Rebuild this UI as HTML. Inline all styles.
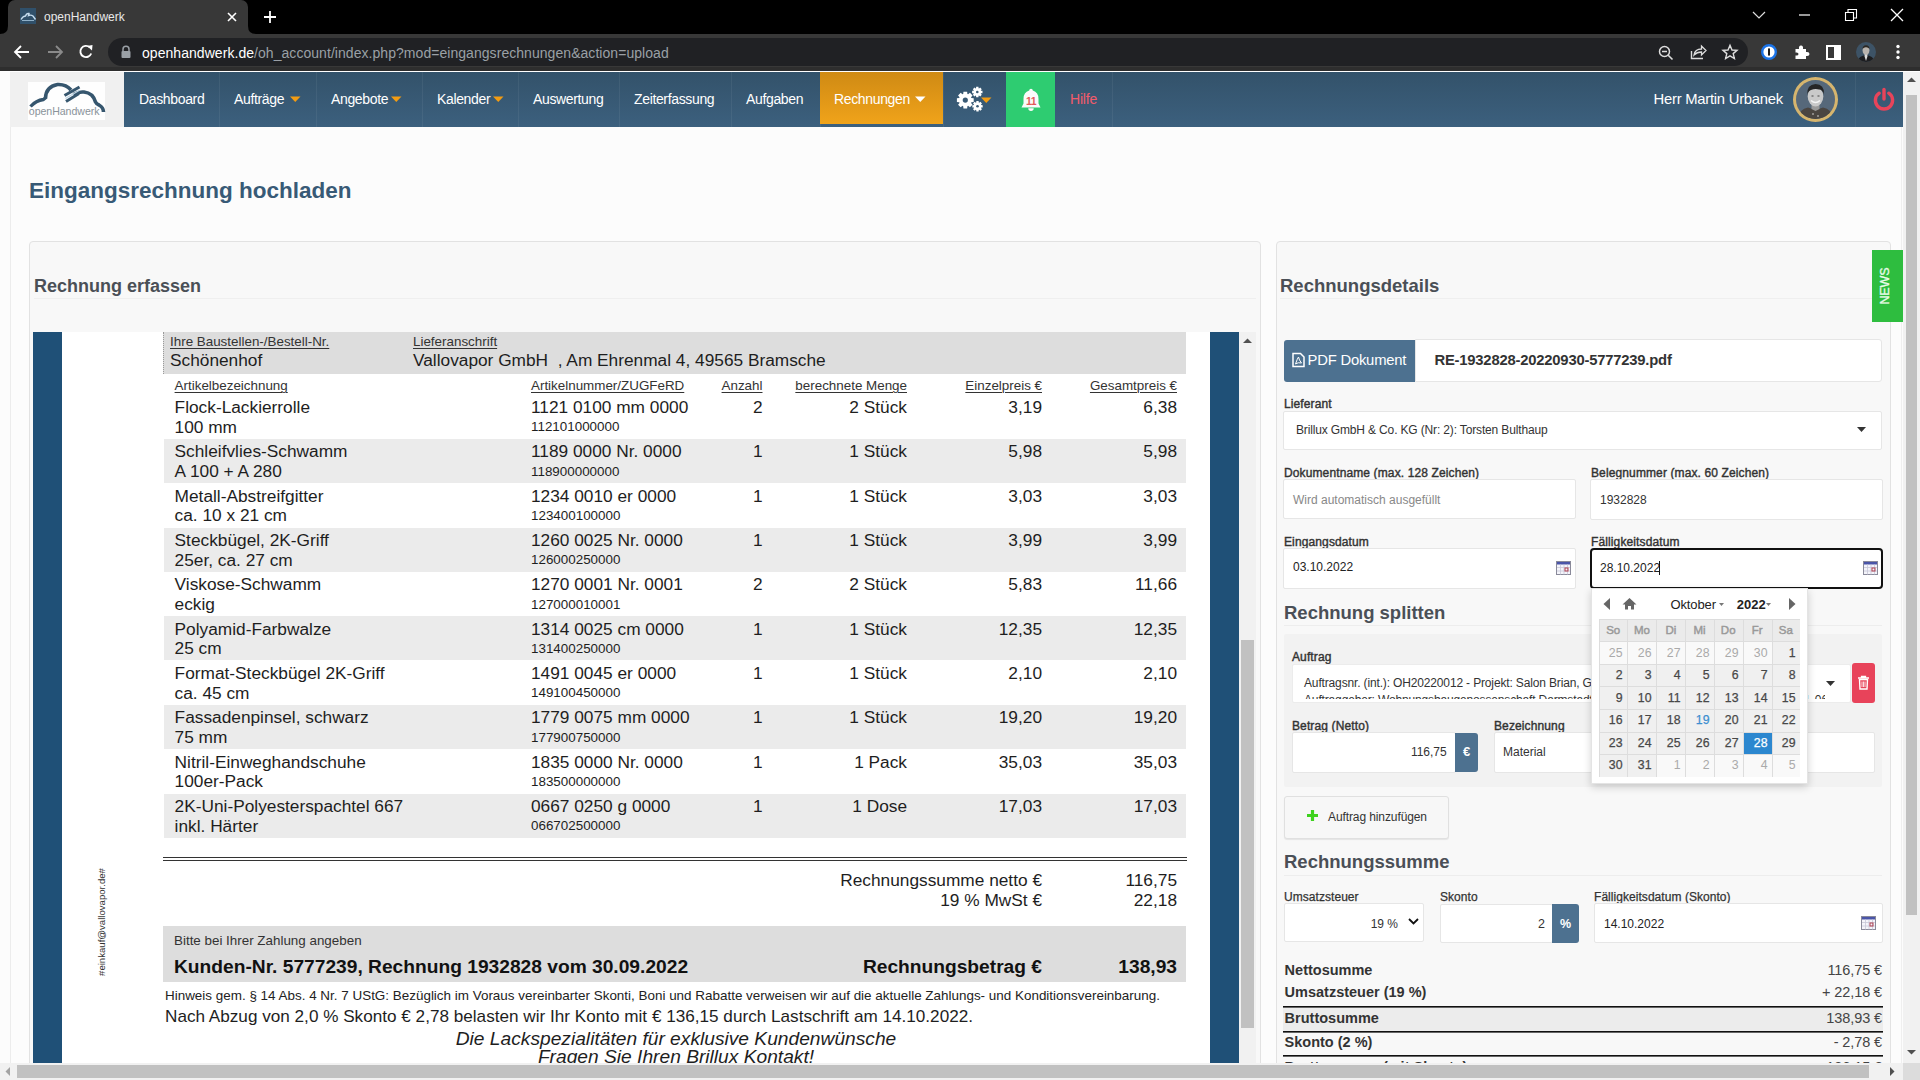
<!DOCTYPE html><html><head><meta charset="utf-8"><style>
*{box-sizing:border-box;margin:0;padding:0}
html,body{width:1920px;height:1080px;overflow:hidden;background:#fcfcfc;font-family:"Liberation Sans",sans-serif;position:relative}
.a{position:absolute}
.t{position:absolute;line-height:1;white-space:nowrap}
.u{text-decoration:underline;text-underline-offset:2px;text-decoration-thickness:1px}
svg{position:absolute;overflow:visible}
</style></head><body>
<div class="a" style="left:0px;top:0px;width:1920px;height:34px;background:#000"></div>
<div class="a" style="left:8px;top:0;width:240px;height:35px;background:#383838;border-radius:7px 7px 0 0"></div>
<svg style="left:0;top:26px" width="8" height="9"><path d="M0 8 Q8 8 8 0 L8 9 L0 9Z" fill="#383838"/></svg>
<svg style="left:248px;top:26px" width="8" height="9"><path d="M8 8 Q0 8 0 0 L0 9 L8 9Z" fill="#383838"/></svg>
<div class="a" style="left:20px;top:8px;width:16px;height:16px;background:#30506a"></div>
<svg style="left:20px;top:8px" width="16" height="16"><path d="M1 11.5 Q3 8 5.5 8 Q6.5 5 9 5.5 L8.5 7.5 Q11 6.5 13 8 L15.5 11.5" stroke="#c5dcee" stroke-width="1.4" fill="none"/><path d="M2 12.5 H14" stroke="#8fb0c8" stroke-width="1"/></svg>
<div class="t" style="left:44.0px;top:10.8px;font-size:12px;color:#e8e8e8">openHandwerk</div>
<svg style="left:227px;top:12px" width="10" height="10"><path d="M1 1 L9 9 M9 1 L1 9" stroke="#fff" stroke-width="1.6"/></svg>
<svg style="left:263px;top:10px" width="14" height="14"><path d="M7 1 V13 M1 7 H13" stroke="#fff" stroke-width="1.8"/></svg>
<svg style="left:1752px;top:9px" width="14" height="10"><path d="M1 3 L7 9 L13 3" stroke="#ddd" stroke-width="1.2" fill="none"/></svg>
<svg style="left:1799px;top:14px" width="12" height="2"><path d="M0 1 H11" stroke="#fff" stroke-width="1.2"/></svg>
<svg style="left:1845px;top:9px" width="12" height="12"><path d="M0.5 3.5 H8.5 V11.5 H0.5Z M3 3.5 V0.5 H11.5 V9 H8.5" stroke="#fff" stroke-width="1.1" fill="none"/></svg>
<svg style="left:1890px;top:8px" width="14" height="14"><path d="M1 1 L13 13 M13 1 L1 13" stroke="#fff" stroke-width="1.3"/></svg>
<div class="a" style="left:0px;top:34px;width:1920px;height:37px;background:#383838"></div>
<div class="a" style="left:108px;top:38px;width:1640px;height:28px;background:#202124;border-radius:14px"></div>
<div class="a" style="left:0px;top:67px;width:1920px;height:4px;background:#2e2e2e"></div>
<div class="a" style="left:0px;top:71px;width:1920px;height:1px;background:#fff"></div>
<svg style="left:13px;top:44px" width="18" height="16"><path d="M16 8 H2 M8 2 L2 8 L8 14" stroke="#fff" stroke-width="1.8" fill="none"/></svg>
<svg style="left:46px;top:44px" width="18" height="16"><path d="M2 8 H16 M10 2 L16 8 L10 14" stroke="#8a8a8a" stroke-width="1.8" fill="none"/></svg>
<svg style="left:78px;top:44px" width="16" height="16"><path d="M13.2 9.5 A5.6 5.6 0 1 1 11.8 3.4" stroke="#fff" stroke-width="1.9" fill="none"/><path d="M9 2 L14.5 1 L14 6.5Z" fill="#fff"/></svg>
<svg style="left:120px;top:45px" width="12" height="14"><path d="M3 6 V4.2 A3 3 0 0 1 9 4.2 V6" stroke="#9aa0a6" stroke-width="1.5" fill="none"/><rect x="1.5" y="6" width="9" height="7" rx="1" fill="#9aa0a6"/></svg>
<div class="t" style="left:142.0px;top:45.6px;font-size:14px;letter-spacing:0.05px"><span style="color:#fff">openhandwerk.de</span><span style="color:#9aa0a6">/oh_account/index.php?mod=eingangsrechnungen&amp;action=upload</span></div>
<svg style="left:1658px;top:45px" width="16" height="16"><circle cx="6.5" cy="6.5" r="5" stroke="#ddd" stroke-width="1.5" fill="none"/><path d="M4 6.5 H9 M10.2 10.2 L14.5 14.5" stroke="#ddd" stroke-width="1.6"/></svg>
<svg style="left:1690px;top:44px" width="17" height="16"><path d="M1.5 7 V14.5 H13" stroke="#ddd" stroke-width="1.4" fill="none"/><path d="M4 11 Q5 5 11.5 5 V2 L16 6.5 L11.5 11 V8 Q7 8 4 11Z" stroke="#ddd" stroke-width="1.3" fill="none"/></svg>
<svg style="left:1722px;top:44px" width="16" height="16"><path d="M8 1.2 L10 6 L15 6.3 L11.2 9.6 L12.4 14.6 L8 11.9 L3.6 14.6 L4.8 9.6 L1 6.3 L6 6Z" stroke="#ddd" stroke-width="1.4" fill="none"/></svg>
<svg style="left:1761px;top:44px" width="16" height="16"><circle cx="8" cy="8" r="6.8" fill="#fff" stroke="#1a73e8" stroke-width="2.4"/><rect x="7" y="4.2" width="2" height="7.6" rx="0.8" fill="#1a1a1a"/></svg>
<svg style="left:1794px;top:44px" width="16" height="16"><path d="M1.5 5 H5 Q4.5 1.5 7 1.5 Q9.5 1.5 9 5 H12 V8 Q15.5 7.5 15.5 10 Q15.5 12.5 12 12 V15 H1.5 V11.5 Q4.5 12 4.5 10 Q4.5 8 1.5 8.5Z" fill="#fff"/></svg>
<svg style="left:1826px;top:45px" width="15" height="15"><rect x="1" y="1" width="13" height="13" fill="none" stroke="#fff" stroke-width="2"/><rect x="8" y="1" width="6" height="13" fill="#fff"/></svg>
<svg style="left:1856px;top:42px" width="20" height="20"><clipPath id="pav"><circle cx="10" cy="10" r="10"/></clipPath><g clip-path="url(#pav)"><rect width="20" height="20" fill="#3d5366"/><path d="M1 20 Q3 13.5 10 13 Q17 13.5 19 20Z" fill="#1d1d1f"/><path d="M8.6 12 V14.5 L10 19 L11.4 14.5 V12Z" fill="#ddd"/><ellipse cx="10" cy="8.3" rx="3.4" ry="4.4" fill="#b9b4ae"/><path d="M6.5 7 Q6.5 3.2 10 3.2 Q13.5 3.2 13.5 7 Q12 5 10 5.2 Q8 5 6.5 7Z" fill="#2a2622"/></g></svg>
<svg style="left:1895px;top:44px" width="6" height="16"><circle cx="3" cy="2.5" r="1.7" fill="#fff"/><circle cx="3" cy="8" r="1.7" fill="#fff"/><circle cx="3" cy="13.5" r="1.7" fill="#fff"/></svg>
<div class="a" style="left:10px;top:72px;width:114px;height:55px;background:#f0f0f0"></div>
<div class="a" style="left:10px;top:127px;width:1px;height:940px;background:#ececec"></div>
<div class="a" style="left:1901px;top:127px;width:1px;height:940px;background:#efefef"></div>
<div class="a" style="left:28px;top:82px;width:77px;height:38px;background:#fefefe"></div>
<svg style="left:0;top:60px" width="124" height="67"><g fill="none" stroke="#36566e" stroke-linecap="butt">
<path d="M30.5 46.5 Q36 40.5 43.5 39.5 L46.5 37" stroke-width="3.3"/>
<path d="M45.5 38 Q46 26.5 57.5 24.5 Q66 24 71 30" stroke-width="3.6"/>
<path d="M73.5 34.5 Q78 31.5 84 32 Q93 33 95.5 42 Q96.5 44 99 45 Q103.5 47.5 103.5 52" stroke-width="3.6"/>
<path d="M64.5 35.5 L79.5 27" stroke-width="3"/>
<path d="M66 41.5 L79 33.5" stroke-width="3"/>
<path d="M65.5 38.5 L79.5 30.3" stroke="#bcd3e3" stroke-width="1.2"/>
</g><text x="28.8" y="54.6" style="font-family:'Liberation Sans',sans-serif" font-size="10.6" fill="#8a939a" letter-spacing="-0.05">openHandwerk</text></svg>
<div class="a" style="left:124px;top:72px;width:1779px;height:55px;background:linear-gradient(#33526a,#3c607e)"></div>
<div class="a" style="left:219px;top:72px;width:1px;height:55px;background:rgba(255,255,255,0.06)"></div>
<div class="a" style="left:316px;top:72px;width:1px;height:55px;background:rgba(255,255,255,0.06)"></div>
<div class="a" style="left:422px;top:72px;width:1px;height:55px;background:rgba(255,255,255,0.06)"></div>
<div class="a" style="left:518px;top:72px;width:1px;height:55px;background:rgba(255,255,255,0.06)"></div>
<div class="a" style="left:619px;top:72px;width:1px;height:55px;background:rgba(255,255,255,0.06)"></div>
<div class="a" style="left:731px;top:72px;width:1px;height:55px;background:rgba(255,255,255,0.06)"></div>
<div class="a" style="left:820px;top:72px;width:1px;height:55px;background:rgba(255,255,255,0.06)"></div>
<div class="a" style="left:943px;top:72px;width:1px;height:55px;background:rgba(255,255,255,0.06)"></div>
<div class="a" style="left:1006px;top:72px;width:1px;height:55px;background:rgba(255,255,255,0.06)"></div>
<div class="a" style="left:1112px;top:72px;width:1px;height:55px;background:rgba(255,255,255,0.06)"></div>
<div class="a" style="left:1855px;top:72px;width:1px;height:55px;background:rgba(255,255,255,0.06)"></div>
<div class="a" style="left:820px;top:72px;width:123px;height:52px;background:linear-gradient(#cf8a14,#f0a31a)"></div>
<div class="a" style="left:1006px;top:72px;width:49px;height:55px;background:#2ecc71"></div>
<div class="t" style="left:139.0px;top:92.1px;font-size:14px;color:#fff;letter-spacing:-0.35px">Dashboard</div>
<div class="t" style="left:234.0px;top:92.1px;font-size:14px;color:#fff;letter-spacing:-0.35px">Aufträge</div>
<svg style="left:290px;top:96px" width="11" height="7"><path d="M0 0.5 H10.5 L5.25 6Z" fill="#f39c12"/></svg>
<div class="t" style="left:331.0px;top:92.1px;font-size:14px;color:#fff;letter-spacing:-0.35px">Angebote</div>
<svg style="left:391px;top:96px" width="11" height="7"><path d="M0 0.5 H10.5 L5.25 6Z" fill="#f39c12"/></svg>
<div class="t" style="left:437.0px;top:92.1px;font-size:14px;color:#fff;letter-spacing:-0.35px">Kalender</div>
<svg style="left:493px;top:96px" width="11" height="7"><path d="M0 0.5 H10.5 L5.25 6Z" fill="#f39c12"/></svg>
<div class="t" style="left:533.0px;top:92.1px;font-size:14px;color:#fff;letter-spacing:-0.35px">Auswertung</div>
<div class="t" style="left:634.0px;top:92.1px;font-size:14px;color:#fff;letter-spacing:-0.35px">Zeiterfassung</div>
<div class="t" style="left:746.0px;top:92.1px;font-size:14px;color:#fff;letter-spacing:-0.35px">Aufgaben</div>
<div class="t" style="left:834.0px;top:92.1px;font-size:14px;color:#fff;letter-spacing:-0.35px">Rechnungen</div>
<svg style="left:915px;top:96px" width="11" height="7"><path d="M0 0.5 H10.5 L5.25 6Z" fill="#fff"/></svg>
<svg style="left:950px;top:84px" width="40" height="32"><path d="M23.70 14.26 L23.70 17.94 L21.35 18.20 L21.06 18.89 L22.54 20.74 L19.94 23.34 L18.09 21.86 L17.40 22.15 L17.14 24.50 L13.46 24.50 L13.20 22.15 L12.51 21.86 L10.66 23.34 L8.06 20.74 L9.54 18.89 L9.25 18.20 L6.90 17.94 L6.90 14.26 L9.25 14.00 L9.54 13.31 L8.06 11.46 L10.66 8.86 L12.51 10.34 L13.20 10.05 L13.46 7.70 L17.14 7.70 L17.40 10.05 L18.09 10.34 L19.94 8.86 L22.54 11.46 L21.06 13.31 L21.35 14.00Z" fill="#fff"/><circle cx="15.3" cy="16.1" r="2.6" fill="#395a74"/><path d="M32.48 6.86 L32.48 9.14 L30.98 9.28 L30.81 9.70 L31.76 10.86 L30.16 12.46 L29.00 11.51 L28.58 11.68 L28.44 13.18 L26.16 13.18 L26.02 11.68 L25.60 11.51 L24.44 12.46 L22.84 10.86 L23.79 9.70 L23.62 9.28 L22.12 9.14 L22.12 6.86 L23.62 6.72 L23.79 6.30 L22.84 5.14 L24.44 3.54 L25.60 4.49 L26.02 4.32 L26.16 2.82 L28.44 2.82 L28.58 4.32 L29.00 4.49 L30.16 3.54 L31.76 5.14 L30.81 6.30 L30.98 6.72Z" fill="#fff"/><circle cx="27.3" cy="8" r="1.3" fill="#395a74"/><path d="M32.68 21.16 L32.68 23.44 L31.18 23.58 L31.01 24.00 L31.96 25.16 L30.36 26.76 L29.20 25.81 L28.78 25.98 L28.64 27.48 L26.36 27.48 L26.22 25.98 L25.80 25.81 L24.64 26.76 L23.04 25.16 L23.99 24.00 L23.82 23.58 L22.32 23.44 L22.32 21.16 L23.82 21.02 L23.99 20.60 L23.04 19.44 L24.64 17.84 L25.80 18.79 L26.22 18.62 L26.36 17.12 L28.64 17.12 L28.78 18.62 L29.20 18.79 L30.36 17.84 L31.96 19.44 L31.01 20.60 L31.18 21.02Z" fill="#fff"/><circle cx="27.5" cy="22.3" r="1.3" fill="#395a74"/></svg>
<svg style="left:981px;top:97px" width="11" height="7"><path d="M0 0.5 H10.5 L5.25 6Z" fill="#f39c12"/></svg>
<svg style="left:1019px;top:88px" width="24" height="26"><path d="M12 0.8 A1.8 1.8 0 0 1 13.8 2.6 Q19.5 4.2 19.5 11 V15.5 L21.5 19.5 H2.5 L4.5 15.5 V11 Q4.5 4.2 10.2 2.6 A1.8 1.8 0 0 1 12 0.8Z" fill="#fafafa"/><path d="M9.3 20.3 A2.7 2.7 0 0 0 14.7 20.3Z" fill="#fafafa"/><text x="12" y="17.2" text-anchor="middle" style="font-family:'Liberation Sans',sans-serif" font-weight="bold" font-size="10.5" fill="#e25a5a" letter-spacing="-0.5">11</text></svg>
<div class="t" style="left:1070.0px;top:92.1px;font-size:14px;color:#f25b6b;letter-spacing:-0.2px">Hilfe</div>
<div class="t" style="left:1653.6px;top:91.5px;font-size:14.8px;color:#fff;letter-spacing:-0.25px">Herr Martin Urbanek</div>
<div class="a" style="left:1793px;top:77px;width:45px;height:45px;border-radius:50%;background:#d6b56e"></div>
<svg style="left:1795px;top:79px" width="41" height="41"><clipPath id="av"><circle cx="20.5" cy="20.5" r="19.5"/></clipPath><g clip-path="url(#av)"><rect width="41" height="41" fill="#56687a"/>
<path d="M2 41 Q4 30 13 28.5 L20.5 31 L28 28.5 Q37 30 39 41Z" fill="#4a4541"/>
<path d="M16.5 25 V30 L20.5 32 L24.5 30 V25Z" fill="#9a9a9a"/>
<ellipse cx="20.5" cy="17.5" rx="7.8" ry="10" fill="#c9c9c9"/>
<path d="M12.2 16 Q11.5 5.5 20.5 5 Q29.5 5 29 15.5 Q27.5 10.5 24 10.5 Q20 9.5 16 11 Q13 12 12.2 16Z" fill="#262626"/>
<path d="M16 21.5 Q20.5 25.5 25 21.5" stroke="#f4f4f4" stroke-width="1.6" fill="none"/>
<path d="M16.5 17 H18.5 M22.5 17 H24.5" stroke="#444" stroke-width="1"/>
<circle cx="18" cy="35" r="0.7" fill="#fff"/><circle cx="23" cy="37" r="0.7" fill="#fff"/></g></svg>
<svg style="left:1872px;top:88px" width="24" height="24"><path d="M7.2 5.2 A8.6 8.6 0 1 0 16.8 5.2" stroke="#e8445a" stroke-width="3.4" fill="none" stroke-linecap="round"/><path d="M12 1.5 V11" stroke="#e8445a" stroke-width="3.4" stroke-linecap="round"/></svg>
<div class="t" style="left:29.0px;top:180.0px;font-size:22.5px;font-weight:bold;color:#385a76">Eingangsrechnung hochladen</div>
<div class="a" style="left:29px;top:241px;width:1232px;height:830px;background:#f8f8f8;border:1px solid #e2e2e2;border-radius:4px"></div>
<div class="t" style="left:34.0px;top:277.4px;font-size:18px;font-weight:bold;color:#4a4f56">Rechnung erfassen</div>
<div class="a" style="left:34px;top:298px;width:1222px;height:1px;background:#efefef"></div>
<div class="a" style="left:33px;top:332px;width:1223px;height:731px;background:#fff"></div>
<div class="a" style="left:33px;top:332px;width:29px;height:731px;background:#1f5077"></div>
<div class="a" style="left:1210px;top:332px;width:29px;height:731px;background:#1f5077"></div>
<div class="a" style="left:1239px;top:332px;width:17px;height:731px;background:#f1f1f1"></div>
<div class="a" style="left:1241px;top:640px;width:13px;height:388px;background:#c1c1c1"></div>
<svg style="left:1242px;top:337px" width="11" height="8"><path d="M1 6 L5.5 1.5 L10 6Z" fill="#505050"/></svg>
<div class="a" style="left:62px;top:332px;width:1148px;height:731px;overflow:hidden">
<div class="a" style="left:101px;top:-8px;width:1023px;height:50px;background:#dddddd"></div>
<div class="a" style="left:101px;top:0px;width:1px;height:42px;border-left:1px dotted #9a9a9a"></div>
<div class="t" style="left:108.0px;top:2.7px;font-size:13.4px;color:#1e1e1e;color:#333"><span class="u">Ihre Baustellen-/Bestell-Nr.</span></div>
<div class="t" style="left:351.0px;top:2.7px;font-size:13.4px;color:#1e1e1e;color:#333"><span class="u">Lieferanschrift</span></div>
<div class="t" style="left:108.0px;top:20.4px;font-size:17.3px;color:#1e1e1e;">Schönenhof</div>
<div class="t" style="left:351.0px;top:20.4px;font-size:17.3px;color:#1e1e1e;">Vallovapor GmbH&nbsp; , Am Ehrenmal 4, 49565 Bramsche</div>
<div class="t" style="left:620.0px;top:-17.1px;font-size:17.3px;color:#1e1e1e;color:#333">g</div>
<div class="t" style="left:774.0px;top:-17.1px;font-size:17.3px;color:#1e1e1e;color:#333">g</div>
<div class="t" style="left:112.6px;top:47.1px;font-size:13.4px;color:#1e1e1e;color:#333"><span class="u">Artikelbezeichnung</span></div>
<div class="t" style="left:469.0px;top:47.1px;font-size:13.4px;color:#1e1e1e;color:#333"><span class="u">Artikelnummer/ZUGFeRD</span></div>
<div class="t" style="left:500.5px;top:47.1px;width:200px;text-align:right;font-size:13.4px;color:#1e1e1e;color:#333"><span class="u">Anzahl</span></div>
<div class="t" style="left:645.0px;top:47.1px;width:200px;text-align:right;font-size:13.4px;color:#1e1e1e;color:#333"><span class="u">berechnete Menge</span></div>
<div class="t" style="left:780.0px;top:47.1px;width:200px;text-align:right;font-size:13.4px;color:#1e1e1e;color:#333"><span class="u">Einzelpreis €</span></div>
<div class="t" style="left:915.0px;top:47.1px;width:200px;text-align:right;font-size:13.4px;color:#1e1e1e;color:#333"><span class="u">Gesamtpreis €</span></div>
<div class="t" style="left:112.6px;top:67.0px;font-size:17.3px;color:#1e1e1e;">Flock-Lackierrolle</div>
<div class="t" style="left:112.6px;top:86.5px;font-size:17.3px;color:#1e1e1e;">100 mm</div>
<div class="t" style="left:469.0px;top:67.0px;font-size:17.3px;color:#1e1e1e;">1121 0100 mm 0000</div>
<div class="t" style="left:469.0px;top:88.3px;font-size:13.4px;color:#1e1e1e;">112101000000</div>
<div class="t" style="left:600.5px;top:67.0px;width:100px;text-align:right;font-size:17.3px;color:#1e1e1e;">2</div>
<div class="t" style="left:645.0px;top:67.0px;width:200px;text-align:right;font-size:17.3px;color:#1e1e1e;">2 Stück</div>
<div class="t" style="left:780.0px;top:67.0px;width:200px;text-align:right;font-size:17.3px;color:#1e1e1e;">3,19</div>
<div class="t" style="left:915.0px;top:67.0px;width:200px;text-align:right;font-size:17.3px;color:#1e1e1e;">6,38</div>
<div class="a" style="left:102px;top:107px;width:1022px;height:44px;background:#ebebeb"></div>
<div class="t" style="left:112.6px;top:111.3px;font-size:17.3px;color:#1e1e1e;">Schleifvlies-Schwamm</div>
<div class="t" style="left:112.6px;top:130.8px;font-size:17.3px;color:#1e1e1e;">A 100 + A 280</div>
<div class="t" style="left:469.0px;top:111.3px;font-size:17.3px;color:#1e1e1e;">1189 0000 Nr. 0000</div>
<div class="t" style="left:469.0px;top:132.6px;font-size:13.4px;color:#1e1e1e;">118900000000</div>
<div class="t" style="left:600.5px;top:111.3px;width:100px;text-align:right;font-size:17.3px;color:#1e1e1e;">1</div>
<div class="t" style="left:645.0px;top:111.3px;width:200px;text-align:right;font-size:17.3px;color:#1e1e1e;">1 Stück</div>
<div class="t" style="left:780.0px;top:111.3px;width:200px;text-align:right;font-size:17.3px;color:#1e1e1e;">5,98</div>
<div class="t" style="left:915.0px;top:111.3px;width:200px;text-align:right;font-size:17.3px;color:#1e1e1e;">5,98</div>
<div class="t" style="left:112.6px;top:155.7px;font-size:17.3px;color:#1e1e1e;">Metall-Abstreifgitter</div>
<div class="t" style="left:112.6px;top:175.2px;font-size:17.3px;color:#1e1e1e;">ca. 10 x 21 cm</div>
<div class="t" style="left:469.0px;top:155.7px;font-size:17.3px;color:#1e1e1e;">1234 0010 er 0000</div>
<div class="t" style="left:469.0px;top:177.0px;font-size:13.4px;color:#1e1e1e;">123400100000</div>
<div class="t" style="left:600.5px;top:155.7px;width:100px;text-align:right;font-size:17.3px;color:#1e1e1e;">1</div>
<div class="t" style="left:645.0px;top:155.7px;width:200px;text-align:right;font-size:17.3px;color:#1e1e1e;">1 Stück</div>
<div class="t" style="left:780.0px;top:155.7px;width:200px;text-align:right;font-size:17.3px;color:#1e1e1e;">3,03</div>
<div class="t" style="left:915.0px;top:155.7px;width:200px;text-align:right;font-size:17.3px;color:#1e1e1e;">3,03</div>
<div class="a" style="left:102px;top:196px;width:1022px;height:44px;background:#ebebeb"></div>
<div class="t" style="left:112.6px;top:200.0px;font-size:17.3px;color:#1e1e1e;">Steckbügel, 2K-Griff</div>
<div class="t" style="left:112.6px;top:219.5px;font-size:17.3px;color:#1e1e1e;">25er, ca. 27 cm</div>
<div class="t" style="left:469.0px;top:200.0px;font-size:17.3px;color:#1e1e1e;">1260 0025 Nr. 0000</div>
<div class="t" style="left:469.0px;top:221.3px;font-size:13.4px;color:#1e1e1e;">126000250000</div>
<div class="t" style="left:600.5px;top:200.0px;width:100px;text-align:right;font-size:17.3px;color:#1e1e1e;">1</div>
<div class="t" style="left:645.0px;top:200.0px;width:200px;text-align:right;font-size:17.3px;color:#1e1e1e;">1 Stück</div>
<div class="t" style="left:780.0px;top:200.0px;width:200px;text-align:right;font-size:17.3px;color:#1e1e1e;">3,99</div>
<div class="t" style="left:915.0px;top:200.0px;width:200px;text-align:right;font-size:17.3px;color:#1e1e1e;">3,99</div>
<div class="t" style="left:112.6px;top:244.4px;font-size:17.3px;color:#1e1e1e;">Viskose-Schwamm</div>
<div class="t" style="left:112.6px;top:263.9px;font-size:17.3px;color:#1e1e1e;">eckig</div>
<div class="t" style="left:469.0px;top:244.4px;font-size:17.3px;color:#1e1e1e;">1270 0001 Nr. 0001</div>
<div class="t" style="left:469.0px;top:265.7px;font-size:13.4px;color:#1e1e1e;">127000010001</div>
<div class="t" style="left:600.5px;top:244.4px;width:100px;text-align:right;font-size:17.3px;color:#1e1e1e;">2</div>
<div class="t" style="left:645.0px;top:244.4px;width:200px;text-align:right;font-size:17.3px;color:#1e1e1e;">2 Stück</div>
<div class="t" style="left:780.0px;top:244.4px;width:200px;text-align:right;font-size:17.3px;color:#1e1e1e;">5,83</div>
<div class="t" style="left:915.0px;top:244.4px;width:200px;text-align:right;font-size:17.3px;color:#1e1e1e;">11,66</div>
<div class="a" style="left:102px;top:284px;width:1022px;height:44px;background:#ebebeb"></div>
<div class="t" style="left:112.6px;top:288.7px;font-size:17.3px;color:#1e1e1e;">Polyamid-Farbwalze</div>
<div class="t" style="left:112.6px;top:308.2px;font-size:17.3px;color:#1e1e1e;">25 cm</div>
<div class="t" style="left:469.0px;top:288.7px;font-size:17.3px;color:#1e1e1e;">1314 0025 cm 0000</div>
<div class="t" style="left:469.0px;top:310.0px;font-size:13.4px;color:#1e1e1e;">131400250000</div>
<div class="t" style="left:600.5px;top:288.7px;width:100px;text-align:right;font-size:17.3px;color:#1e1e1e;">1</div>
<div class="t" style="left:645.0px;top:288.7px;width:200px;text-align:right;font-size:17.3px;color:#1e1e1e;">1 Stück</div>
<div class="t" style="left:780.0px;top:288.7px;width:200px;text-align:right;font-size:17.3px;color:#1e1e1e;">12,35</div>
<div class="t" style="left:915.0px;top:288.7px;width:200px;text-align:right;font-size:17.3px;color:#1e1e1e;">12,35</div>
<div class="t" style="left:112.6px;top:333.1px;font-size:17.3px;color:#1e1e1e;">Format-Steckbügel 2K-Griff</div>
<div class="t" style="left:112.6px;top:352.6px;font-size:17.3px;color:#1e1e1e;">ca. 45 cm</div>
<div class="t" style="left:469.0px;top:333.1px;font-size:17.3px;color:#1e1e1e;">1491 0045 er 0000</div>
<div class="t" style="left:469.0px;top:354.4px;font-size:13.4px;color:#1e1e1e;">149100450000</div>
<div class="t" style="left:600.5px;top:333.1px;width:100px;text-align:right;font-size:17.3px;color:#1e1e1e;">1</div>
<div class="t" style="left:645.0px;top:333.1px;width:200px;text-align:right;font-size:17.3px;color:#1e1e1e;">1 Stück</div>
<div class="t" style="left:780.0px;top:333.1px;width:200px;text-align:right;font-size:17.3px;color:#1e1e1e;">2,10</div>
<div class="t" style="left:915.0px;top:333.1px;width:200px;text-align:right;font-size:17.3px;color:#1e1e1e;">2,10</div>
<div class="a" style="left:102px;top:373px;width:1022px;height:44px;background:#ebebeb"></div>
<div class="t" style="left:112.6px;top:377.4px;font-size:17.3px;color:#1e1e1e;">Fassadenpinsel, schwarz</div>
<div class="t" style="left:112.6px;top:396.9px;font-size:17.3px;color:#1e1e1e;">75 mm</div>
<div class="t" style="left:469.0px;top:377.4px;font-size:17.3px;color:#1e1e1e;">1779 0075 mm 0000</div>
<div class="t" style="left:469.0px;top:398.7px;font-size:13.4px;color:#1e1e1e;">177900750000</div>
<div class="t" style="left:600.5px;top:377.4px;width:100px;text-align:right;font-size:17.3px;color:#1e1e1e;">1</div>
<div class="t" style="left:645.0px;top:377.4px;width:200px;text-align:right;font-size:17.3px;color:#1e1e1e;">1 Stück</div>
<div class="t" style="left:780.0px;top:377.4px;width:200px;text-align:right;font-size:17.3px;color:#1e1e1e;">19,20</div>
<div class="t" style="left:915.0px;top:377.4px;width:200px;text-align:right;font-size:17.3px;color:#1e1e1e;">19,20</div>
<div class="t" style="left:112.6px;top:421.8px;font-size:17.3px;color:#1e1e1e;">Nitril-Einweghandschuhe</div>
<div class="t" style="left:112.6px;top:441.3px;font-size:17.3px;color:#1e1e1e;">100er-Pack</div>
<div class="t" style="left:469.0px;top:421.8px;font-size:17.3px;color:#1e1e1e;">1835 0000 Nr. 0000</div>
<div class="t" style="left:469.0px;top:443.1px;font-size:13.4px;color:#1e1e1e;">183500000000</div>
<div class="t" style="left:600.5px;top:421.8px;width:100px;text-align:right;font-size:17.3px;color:#1e1e1e;">1</div>
<div class="t" style="left:645.0px;top:421.8px;width:200px;text-align:right;font-size:17.3px;color:#1e1e1e;">1 Pack</div>
<div class="t" style="left:780.0px;top:421.8px;width:200px;text-align:right;font-size:17.3px;color:#1e1e1e;">35,03</div>
<div class="t" style="left:915.0px;top:421.8px;width:200px;text-align:right;font-size:17.3px;color:#1e1e1e;">35,03</div>
<div class="a" style="left:102px;top:462px;width:1022px;height:44px;background:#ebebeb"></div>
<div class="t" style="left:112.6px;top:466.1px;font-size:17.3px;color:#1e1e1e;">2K-Uni-Polyesterspachtel 667</div>
<div class="t" style="left:112.6px;top:485.6px;font-size:17.3px;color:#1e1e1e;">inkl. Härter</div>
<div class="t" style="left:469.0px;top:466.1px;font-size:17.3px;color:#1e1e1e;">0667 0250 g 0000</div>
<div class="t" style="left:469.0px;top:487.4px;font-size:13.4px;color:#1e1e1e;">066702500000</div>
<div class="t" style="left:600.5px;top:466.1px;width:100px;text-align:right;font-size:17.3px;color:#1e1e1e;">1</div>
<div class="t" style="left:645.0px;top:466.1px;width:200px;text-align:right;font-size:17.3px;color:#1e1e1e;">1 Dose</div>
<div class="t" style="left:780.0px;top:466.1px;width:200px;text-align:right;font-size:17.3px;color:#1e1e1e;">17,03</div>
<div class="t" style="left:915.0px;top:466.1px;width:200px;text-align:right;font-size:17.3px;color:#1e1e1e;">17,03</div>
<div class="a" style="left:101px;top:525px;width:1024px;height:1px;background:#333"></div>
<div class="a" style="left:101px;top:528px;width:1024px;height:1px;background:#333"></div>
<div class="t" style="left:580.0px;top:540.4px;width:400px;text-align:right;font-size:17.3px;color:#1e1e1e;">Rechnungssumme netto €</div>
<div class="t" style="left:915.0px;top:540.4px;width:200px;text-align:right;font-size:17.3px;color:#1e1e1e;">116,75</div>
<div class="t" style="left:580.0px;top:560.4px;width:400px;text-align:right;font-size:17.3px;color:#1e1e1e;">19 % MwSt €</div>
<div class="t" style="left:915.0px;top:560.4px;width:200px;text-align:right;font-size:17.3px;color:#1e1e1e;">22,18</div>
<div class="a" style="left:101px;top:594px;width:1023px;height:56px;background:#dddddd"></div>
<div class="t" style="left:112.0px;top:602.2px;font-size:13.4px;color:#1e1e1e;color:#333">Bitte bei Ihrer Zahlung angeben</div>
<div class="t" style="left:112.0px;top:625.2px;font-size:19.2px;color:#1e1e1e;font-weight:bold;color:#111">Kunden-Nr. 5777239, Rechnung 1932828 vom 30.09.2022</div>
<div class="t" style="left:580.0px;top:625.2px;width:400px;text-align:right;font-size:19.2px;color:#1e1e1e;font-weight:bold;color:#111">Rechnungsbetrag €</div>
<div class="t" style="left:915.0px;top:625.2px;width:200px;text-align:right;font-size:19.2px;color:#1e1e1e;font-weight:bold;color:#111">138,93</div>
<div class="t" style="left:103.0px;top:656.6px;font-size:13.45px;color:#1e1e1e;color:#222">Hinweis gem. § 14 Abs. 4 Nr. 7 UStG: Bezüglich im Voraus vereinbarter Skonti, Boni und Rabatte verweisen wir auf die aktuelle Zahlungs- und Konditionsvereinbarung.</div>
<div class="t" style="left:103.0px;top:675.5px;font-size:17.15px;color:#1e1e1e;">Nach Abzug von 2,0 % Skonto € 2,78 belasten wir Ihr Konto mit € 136,15 durch Lastschrift am 14.10.2022.</div>
<div class="t" style="left:214.0px;top:696.7px;font-size:19.2px;color:#1e1e1e;font-style:italic;width:800px;text-align:center">Die Lackspezialitäten für exklusive Kundenwünsche</div>
<div class="t" style="left:214.0px;top:714.7px;font-size:19.2px;color:#1e1e1e;font-style:italic;width:800px;text-align:center">Fragen Sie Ihren Brillux Kontakt!</div>
<div class="t" style="left:-20.5px;top:583.5px;width:120px;height:12px;font-size:9.6px;line-height:12px;text-align:center;color:#333;transform:rotate(-90deg)">#einkauf@vallovapor.de#</div>
</div>
<div class="a" style="left:1276px;top:241px;width:615px;height:840px;background:#f8f8f8;border:1px solid #e2e2e2;border-radius:4px"></div>
<div class="t" style="left:1280.0px;top:276.9px;font-size:18.5px;font-weight:bold;color:#4a4f56">Rechnungsdetails</div>
<div class="a" style="left:1280px;top:298px;width:606px;height:1px;background:#efefef"></div>
<div class="a" style="left:1872px;top:250px;width:31px;height:72px;background:#2ebd3f"></div>
<div class="t" style="left:1853px;top:279px;width:64px;height:14px;font-size:12.5px;line-height:14px;text-align:center;color:#e9fbe9;transform:rotate(-90deg);letter-spacing:-0.1px;-webkit-text-stroke:0.3px #e9fbe9">NEWS</div>
<div class="a" style="left:1415px;top:339px;width:467px;height:43px;background:#fff;border:1px solid #e6e6e6;border-radius:2px;border-radius:0 3px 3px 0"></div>
<div class="a" style="left:1284px;top:340px;width:131px;height:42px;background:#4d7190;border-radius:3px 0 0 3px"></div>
<svg style="left:1292px;top:352px" width="13" height="16"><path d="M1 1.5 H8.5 L12 5 V14.5 H1Z" fill="none" stroke="#fff" stroke-width="1.5"/><path d="M3.5 12 Q5.5 6 6.5 5 Q7 8 9.5 11 Q6 10 3.5 12Z" fill="none" stroke="#fff" stroke-width="1"/></svg>
<div class="t" style="left:1307.5px;top:353.3px;font-size:14.8px;color:#fff;letter-spacing:-0.2px">PDF Dokument</div>
<div class="t" style="left:1434.4px;top:352.5px;font-size:14.8px;font-weight:bold;color:#333;letter-spacing:-0.2px">RE-1932828-20220930-5777239.pdf</div>
<div class="t" style="left:1284.0px;top:398.1px;font-size:12px;color:#333;-webkit-text-stroke:0.4px #333;letter-spacing:0.12px">Lieferant</div>
<div class="a" style="left:1283px;top:411px;width:599px;height:39px;background:#fff;border:1px solid #e6e6e6;border-radius:2px;"></div>
<div class="t" style="left:1296.0px;top:423.6px;font-size:12px;color:#333;letter-spacing:-0.15px">Brillux GmbH &amp; Co. KG (Nr: 2): Torsten Bulthaup</div>
<svg style="left:1857px;top:427px" width="10" height="6"><path d="M0 0 H9 L4.5 5Z" fill="#333"/></svg>
<div class="t" style="left:1284.0px;top:466.8px;font-size:12px;color:#333;-webkit-text-stroke:0.4px #333;letter-spacing:0.12px">Dokumentname (max. 128 Zeichen)</div>
<div class="t" style="left:1591.0px;top:466.8px;font-size:12px;color:#333;-webkit-text-stroke:0.4px #333;letter-spacing:0.12px">Belegnummer (max. 60 Zeichen)</div>
<div class="a" style="left:1283px;top:479px;width:293px;height:40px;background:#fff;border:1px solid #e6e6e6;border-radius:2px;"></div>
<div class="a" style="left:1590px;top:479px;width:293px;height:41px;background:#fff;border:1px solid #e6e6e6;border-radius:2px;"></div>
<div class="t" style="left:1293.0px;top:493.8px;font-size:12px;color:#888">Wird automatisch ausgefüllt</div>
<div class="t" style="left:1600.0px;top:493.6px;font-size:12px;color:#333">1932828</div>
<div class="t" style="left:1284.0px;top:535.8px;font-size:12px;color:#333;-webkit-text-stroke:0.4px #333;letter-spacing:0.12px">Eingangsdatum</div>
<div class="t" style="left:1591.0px;top:535.8px;font-size:12px;color:#333;-webkit-text-stroke:0.4px #333;letter-spacing:0.12px">Fälligkeitsdatum</div>
<div class="a" style="left:1283px;top:548px;width:293px;height:41px;background:#fff;border:1px solid #e6e6e6;border-radius:2px;"></div>
<svg style="left:1556px;top:561px" width="15" height="14"><rect x="0.5" y="0.5" width="14" height="13" fill="#f4f4fa" stroke="#8a8a9a"/><rect x="1" y="1" width="13" height="2.5" fill="#4a55a8"/><path d="M1 6.5 H14 M1 10 H14 M4.5 3.5 V13.5 M8 3.5 V13.5 M11.5 3.5 V13.5" stroke="#c8c8d8" stroke-width="0.8"/><rect x="9" y="7" width="3" height="3" fill="none" stroke="#b04050" stroke-width="1"/></svg>
<div class="t" style="left:1293.0px;top:561.3px;font-size:12px;color:#222">03.10.2022</div>
<div class="a" style="left:1590px;top:548px;width:293px;height:41px;background:#fff;border:2px solid #111;border-radius:4px"></div>
<div class="t" style="left:1600.0px;top:561.5px;font-size:12px;color:#222">28.10.2022</div>
<div class="a" style="left:1659px;top:561px;width:1px;height:14px;background:#111"></div>
<svg style="left:1863px;top:561px" width="15" height="14"><rect x="0.5" y="0.5" width="14" height="13" fill="#f4f4fa" stroke="#8a8a9a"/><rect x="1" y="1" width="13" height="2.5" fill="#4a55a8"/><path d="M1 6.5 H14 M1 10 H14 M4.5 3.5 V13.5 M8 3.5 V13.5 M11.5 3.5 V13.5" stroke="#c8c8d8" stroke-width="0.8"/><rect x="9" y="7" width="3" height="3" fill="none" stroke="#b04050" stroke-width="1"/></svg>
<div class="t" style="left:1284.0px;top:603.8px;font-size:18.5px;font-weight:bold;color:#4a4f56">Rechnung splitten</div>
<div class="a" style="left:1284px;top:625px;width:598px;height:1px;background:#ededed"></div>
<div class="a" style="left:1284px;top:634px;width:598px;height:153px;background:#f2f2f2;border-radius:2px"></div>
<div class="t" style="left:1292.0px;top:650.6px;font-size:12px;color:#333;-webkit-text-stroke:0.4px #333;letter-spacing:0.12px">Auftrag</div>
<div class="a" style="left:1292px;top:664px;width:559px;height:39px;background:#fff;border:1px solid #e6e6e6;border-radius:2px;border-color:#ececec;overflow:hidden"></div>
<div class="a" style="left:1293px;top:665px;width:532px;height:34px;overflow:hidden">
<div class="t" style="left:11.0px;top:11.8px;font-size:12px;color:#333;letter-spacing:-0.15px">Auftragsnr. (int.): OH20220012 - Projekt: Salon Brian, Gründerstraße 12, 64283 Darmstadt</div>
<div class="t" style="left:11.0px;top:28.8px;font-size:12px;color:#333;letter-spacing:-0.15px">Auftraggeber: Wohnungsbaugenossenschaft Darmstadt eG, Rheinstraße 1, 64283 Darmstadt, Tel. 06151</div>
</div>
<svg style="left:1826px;top:681px" width="10" height="6"><path d="M0 0 H9 L4.5 5Z" fill="#333"/></svg>
<div class="a" style="left:1852px;top:663px;width:23px;height:40px;background:#e8435a;border-radius:3px"></div>
<svg style="left:1857px;top:675px" width="13" height="15"><path d="M1 3 H12 M4.5 3 V1.5 H8.5 V3" stroke="#fff" stroke-width="1.3" fill="none"/><path d="M2.5 4.5 H10.5 L10 14 H3Z" fill="none" stroke="#fff" stroke-width="1.4"/><path d="M5 6.5 V12 M6.5 6.5 V12 M8 6.5 V12" stroke="#fff" stroke-width="0.8"/></svg>
<div class="t" style="left:1292.0px;top:719.8px;font-size:12px;color:#333;-webkit-text-stroke:0.4px #333;letter-spacing:0.12px">Betrag (Netto)</div>
<div class="t" style="left:1494.0px;top:719.8px;font-size:12px;color:#333;-webkit-text-stroke:0.4px #333;letter-spacing:0.12px">Bezeichnung</div>
<div class="a" style="left:1292px;top:732px;width:164px;height:41px;background:#fff;border:1px solid #e6e6e6;border-radius:2px;"></div>
<div class="a" style="left:1455px;top:733px;width:23px;height:39px;background:#4d7190;border-radius:0 3px 3px 0"></div>
<div class="t" style="left:1466.5px;top:745.0px;font-size:13px;color:#fff;font-weight:bold;text-align:center;width:20px;margin-left:-10px">€</div>
<div class="t" style="left:1346.7px;top:745.8px;width:100px;text-align:right;font-size:12px;color:#333">116,75</div>
<div class="a" style="left:1494px;top:732px;width:381px;height:41px;background:#fff;border:1px solid #e6e6e6;border-radius:2px;"></div>
<div class="t" style="left:1503.0px;top:745.8px;font-size:12px;color:#333">Material</div>
<div class="a" style="left:1284px;top:796px;width:165px;height:43px;background:#f7f7f7;border:1px solid #e0e0e0;border-radius:3px;box-shadow:0 1px 1px rgba(0,0,0,0.08)"></div>
<svg style="left:1306px;top:809px" width="13" height="13"><path d="M6.5 1 V12 M1 6.5 H12" stroke="#3ed21e" stroke-width="3.2"/></svg>
<div class="t" style="left:1328.0px;top:810.8px;font-size:12px;color:#333;letter-spacing:-0.1px">Auftrag hinzufügen</div>
<div class="t" style="left:1284.0px;top:852.8px;font-size:18.5px;font-weight:bold;color:#4a4f56">Rechnungssumme</div>
<div class="a" style="left:1284px;top:875px;width:598px;height:1px;background:#ededed"></div>
<div class="t" style="left:1284.0px;top:890.6px;font-size:12px;color:#333;-webkit-text-stroke:0.25px #333;letter-spacing:0.05px">Umsatzsteuer</div>
<div class="t" style="left:1440.0px;top:890.6px;font-size:12px;color:#333;-webkit-text-stroke:0.25px #333;letter-spacing:0.05px">Skonto</div>
<div class="t" style="left:1594.0px;top:890.6px;font-size:12px;color:#333;-webkit-text-stroke:0.25px #333;letter-spacing:0.05px">Fälligkeitsdatum (Skonto)</div>
<div class="a" style="left:1284px;top:903px;width:140px;height:39px;background:#fff;border:1px solid #e6e6e6;border-radius:2px;"></div>
<div class="t" style="left:1298.0px;top:917.8px;width:100px;text-align:right;font-size:12px;color:#333">19 %</div>
<svg style="left:1408px;top:918px" width="11" height="7"><path d="M1 1 L5.5 5.5 L10 1" stroke="#111" stroke-width="1.8" fill="none"/></svg>
<div class="a" style="left:1440px;top:904px;width:113px;height:39px;background:#fff;border:1px solid #e6e6e6;border-radius:2px;"></div>
<div class="a" style="left:1552px;top:904px;width:27px;height:39px;background:#4d7190;border-radius:0 3px 3px 0"></div>
<div class="t" style="left:1565.5px;top:917.9px;font-size:12.5px;color:#fff;font-weight:bold;text-align:center;width:20px;margin-left:-10px">%</div>
<div class="t" style="left:1495.0px;top:917.9px;width:50px;text-align:right;font-size:12.5px;color:#333">2</div>
<div class="a" style="left:1594px;top:903px;width:289px;height:40px;background:#fff;border:1px solid #e6e6e6;border-radius:2px;"></div>
<svg style="left:1861px;top:916px" width="15" height="14"><rect x="0.5" y="0.5" width="14" height="13" fill="#f4f4fa" stroke="#8a8a9a"/><rect x="1" y="1" width="13" height="2.5" fill="#4a55a8"/><path d="M1 6.5 H14 M1 10 H14 M4.5 3.5 V13.5 M8 3.5 V13.5 M11.5 3.5 V13.5" stroke="#c8c8d8" stroke-width="0.8"/><rect x="9" y="7" width="3" height="3" fill="none" stroke="#b04050" stroke-width="1"/></svg>
<div class="t" style="left:1604.0px;top:917.8px;font-size:12px;color:#222">14.10.2022</div>
<div class="t" style="left:1284.6px;top:962.7px;font-size:14.5px;font-weight:bold;color:#333">Nettosumme</div>
<div class="t" style="left:1682.0px;top:962.7px;width:200px;text-align:right;font-size:14.5px;color:#444;letter-spacing:-0.1px">116,75 €</div>
<div class="t" style="left:1284.6px;top:985.3px;font-size:14.5px;font-weight:bold;color:#333">Umsatzsteuer (19 %)</div>
<div class="t" style="left:1682.0px;top:985.3px;width:200px;text-align:right;font-size:14.5px;color:#444;letter-spacing:-0.1px">+ 22,18 €</div>
<div class="a" style="left:1283px;top:1006px;width:600px;height:1px;background:#111"></div>
<div class="a" style="left:1283px;top:1007px;width:600px;height:1px;background:#666"></div>
<div class="a" style="left:1283px;top:1008px;width:600px;height:23px;background:#ececec"></div>
<div class="t" style="left:1284.6px;top:1010.7px;font-size:14.5px;font-weight:bold;color:#333">Bruttosumme</div>
<div class="t" style="left:1682.0px;top:1010.7px;width:200px;text-align:right;font-size:14.5px;color:#444;letter-spacing:-0.1px">138,93 €</div>
<div class="a" style="left:1283px;top:1031px;width:600px;height:1px;background:#111"></div>
<div class="a" style="left:1283px;top:1032px;width:600px;height:1px;background:#666"></div>
<div class="t" style="left:1284.6px;top:1035.2px;font-size:14.5px;font-weight:bold;color:#333">Skonto (2 %)</div>
<div class="t" style="left:1682.0px;top:1035.2px;width:200px;text-align:right;font-size:14.5px;color:#444;letter-spacing:-0.1px">- 2,78 €</div>
<div class="a" style="left:1283px;top:1055px;width:600px;height:1px;background:#111"></div>
<div class="a" style="left:1283px;top:1056px;width:600px;height:1px;background:#666"></div>
<div class="t" style="left:1284.6px;top:1059.7px;font-size:14.5px;font-weight:bold;color:#333">Bruttosumme (mit Skonto)</div>
<div class="t" style="left:1682.0px;top:1059.7px;width:200px;text-align:right;font-size:14.5px;color:#444;letter-spacing:-0.1px">136,15 €</div>
<div class="a" style="left:1591px;top:588px;width:217px;height:196px;background:#fff;border:1px solid #e4e4e4;box-shadow:0 3px 8px rgba(0,0,0,0.18)"></div>
<svg style="left:1602px;top:597px" width="9" height="14"><path d="M8 1 L1.5 7 L8 13Z" fill="#666"/></svg>
<svg style="left:1622px;top:597px" width="15" height="13"><path d="M7.5 1 L14.5 7.5 H12 V12.5 H9 V9 H6 V12.5 H3 V7.5 H0.5Z" fill="#666"/></svg>
<svg style="left:1788px;top:597px" width="9" height="14"><path d="M1 1 L7.5 7 L1 13Z" fill="#666"/></svg>
<div class="t" style="left:1670.4px;top:597.5px;font-size:13px;color:#222;letter-spacing:-0.1px">Oktober</div>
<div class="t" style="left:1736.8px;top:597.5px;font-size:13px;color:#222;font-weight:bold">2022</div>
<svg style="left:1719px;top:603px" width="6" height="4"><path d="M0 0 H5 L2.5 3Z" fill="#777"/></svg>
<svg style="left:1766px;top:603px" width="6" height="4"><path d="M0 0 H5 L2.5 3Z" fill="#777"/></svg>
<div class="a" style="left:1599px;top:619px;width:201px;height:158px;background:#ddd"></div>
<div class="a" style="left:1600px;top:620px;width:27px;height:21px;background:#ebebeb"></div>
<div class="t" style="left:1613.2px;top:624.8px;font-size:11.5px;color:#999;-webkit-text-stroke:0.45px #999;width:28px;margin-left:-14px;text-align:center">So</div>
<div class="a" style="left:1628px;top:620px;width:28px;height:21px;background:#ebebeb"></div>
<div class="t" style="left:1641.9px;top:624.8px;font-size:11.5px;color:#999;-webkit-text-stroke:0.45px #999;width:28px;margin-left:-14px;text-align:center">Mo</div>
<div class="a" style="left:1657px;top:620px;width:28px;height:21px;background:#ebebeb"></div>
<div class="t" style="left:1671.0px;top:624.8px;font-size:11.5px;color:#999;-webkit-text-stroke:0.45px #999;width:28px;margin-left:-14px;text-align:center">Di</div>
<div class="a" style="left:1686px;top:620px;width:28px;height:21px;background:#ebebeb"></div>
<div class="t" style="left:1699.6px;top:624.8px;font-size:11.5px;color:#999;-webkit-text-stroke:0.45px #999;width:28px;margin-left:-14px;text-align:center">Mi</div>
<div class="a" style="left:1715px;top:620px;width:28px;height:21px;background:#ebebeb"></div>
<div class="t" style="left:1728.2px;top:624.8px;font-size:11.5px;color:#999;-webkit-text-stroke:0.45px #999;width:28px;margin-left:-14px;text-align:center">Do</div>
<div class="a" style="left:1744px;top:620px;width:28px;height:21px;background:#ebebeb"></div>
<div class="t" style="left:1757.1px;top:624.8px;font-size:11.5px;color:#999;-webkit-text-stroke:0.45px #999;width:28px;margin-left:-14px;text-align:center">Fr</div>
<div class="a" style="left:1773px;top:620px;width:27px;height:21px;background:#ebebeb"></div>
<div class="t" style="left:1785.8px;top:624.8px;font-size:11.5px;color:#999;-webkit-text-stroke:0.45px #999;width:28px;margin-left:-14px;text-align:center">Sa</div>
<div class="a" style="left:1600px;top:642px;width:27px;height:22px;background:#f9f9f9"></div>
<div class="t" style="left:1592.5px;top:646.6px;width:30px;text-align:right;font-size:12.3px;color:#aaa;font-weight:normal;letter-spacing:0px">25</div>
<div class="a" style="left:1628px;top:642px;width:28px;height:22px;background:#f9f9f9"></div>
<div class="t" style="left:1621.5px;top:646.6px;width:30px;text-align:right;font-size:12.3px;color:#aaa;font-weight:normal;letter-spacing:0px">26</div>
<div class="a" style="left:1657px;top:642px;width:28px;height:22px;background:#f9f9f9"></div>
<div class="t" style="left:1650.5px;top:646.6px;width:30px;text-align:right;font-size:12.3px;color:#aaa;font-weight:normal;letter-spacing:0px">27</div>
<div class="a" style="left:1686px;top:642px;width:28px;height:22px;background:#f9f9f9"></div>
<div class="t" style="left:1679.5px;top:646.6px;width:30px;text-align:right;font-size:12.3px;color:#aaa;font-weight:normal;letter-spacing:0px">28</div>
<div class="a" style="left:1715px;top:642px;width:28px;height:22px;background:#f9f9f9"></div>
<div class="t" style="left:1708.5px;top:646.6px;width:30px;text-align:right;font-size:12.3px;color:#aaa;font-weight:normal;letter-spacing:0px">29</div>
<div class="a" style="left:1744px;top:642px;width:28px;height:22px;background:#f9f9f9"></div>
<div class="t" style="left:1737.5px;top:646.6px;width:30px;text-align:right;font-size:12.3px;color:#aaa;font-weight:normal;letter-spacing:0px">30</div>
<div class="a" style="left:1773px;top:642px;width:27px;height:22px;background:#f0f0f0"></div>
<div class="t" style="left:1765.5px;top:646.6px;width:30px;text-align:right;font-size:12.3px;color:#4a4a4a;font-weight:normal;letter-spacing:0px;-webkit-text-stroke:0.25px #444">1</div>
<div class="a" style="left:1600px;top:665px;width:27px;height:21px;background:#f0f0f0"></div>
<div class="t" style="left:1592.5px;top:669.2px;width:30px;text-align:right;font-size:12.3px;color:#4a4a4a;font-weight:normal;letter-spacing:0px;-webkit-text-stroke:0.25px #444">2</div>
<div class="a" style="left:1628px;top:665px;width:28px;height:21px;background:#f0f0f0"></div>
<div class="t" style="left:1621.5px;top:669.2px;width:30px;text-align:right;font-size:12.3px;color:#4a4a4a;font-weight:normal;letter-spacing:0px;-webkit-text-stroke:0.25px #444">3</div>
<div class="a" style="left:1657px;top:665px;width:28px;height:21px;background:#f0f0f0"></div>
<div class="t" style="left:1650.5px;top:669.2px;width:30px;text-align:right;font-size:12.3px;color:#4a4a4a;font-weight:normal;letter-spacing:0px;-webkit-text-stroke:0.25px #444">4</div>
<div class="a" style="left:1686px;top:665px;width:28px;height:21px;background:#f0f0f0"></div>
<div class="t" style="left:1679.5px;top:669.2px;width:30px;text-align:right;font-size:12.3px;color:#4a4a4a;font-weight:normal;letter-spacing:0px;-webkit-text-stroke:0.25px #444">5</div>
<div class="a" style="left:1715px;top:665px;width:28px;height:21px;background:#f0f0f0"></div>
<div class="t" style="left:1708.5px;top:669.2px;width:30px;text-align:right;font-size:12.3px;color:#4a4a4a;font-weight:normal;letter-spacing:0px;-webkit-text-stroke:0.25px #444">6</div>
<div class="a" style="left:1744px;top:665px;width:28px;height:21px;background:#f0f0f0"></div>
<div class="t" style="left:1737.5px;top:669.2px;width:30px;text-align:right;font-size:12.3px;color:#4a4a4a;font-weight:normal;letter-spacing:0px;-webkit-text-stroke:0.25px #444">7</div>
<div class="a" style="left:1773px;top:665px;width:27px;height:21px;background:#f0f0f0"></div>
<div class="t" style="left:1765.5px;top:669.2px;width:30px;text-align:right;font-size:12.3px;color:#4a4a4a;font-weight:normal;letter-spacing:0px;-webkit-text-stroke:0.25px #444">8</div>
<div class="a" style="left:1600px;top:687px;width:27px;height:22px;background:#f0f0f0"></div>
<div class="t" style="left:1592.5px;top:691.8px;width:30px;text-align:right;font-size:12.3px;color:#4a4a4a;font-weight:normal;letter-spacing:0px;-webkit-text-stroke:0.25px #444">9</div>
<div class="a" style="left:1628px;top:687px;width:28px;height:22px;background:#f0f0f0"></div>
<div class="t" style="left:1621.5px;top:691.8px;width:30px;text-align:right;font-size:12.3px;color:#4a4a4a;font-weight:normal;letter-spacing:0px;-webkit-text-stroke:0.25px #444">10</div>
<div class="a" style="left:1657px;top:687px;width:28px;height:22px;background:#f0f0f0"></div>
<div class="t" style="left:1650.5px;top:691.8px;width:30px;text-align:right;font-size:12.3px;color:#4a4a4a;font-weight:normal;letter-spacing:0px;-webkit-text-stroke:0.25px #444">11</div>
<div class="a" style="left:1686px;top:687px;width:28px;height:22px;background:#f0f0f0"></div>
<div class="t" style="left:1679.5px;top:691.8px;width:30px;text-align:right;font-size:12.3px;color:#4a4a4a;font-weight:normal;letter-spacing:0px;-webkit-text-stroke:0.25px #444">12</div>
<div class="a" style="left:1715px;top:687px;width:28px;height:22px;background:#f0f0f0"></div>
<div class="t" style="left:1708.5px;top:691.8px;width:30px;text-align:right;font-size:12.3px;color:#4a4a4a;font-weight:normal;letter-spacing:0px;-webkit-text-stroke:0.25px #444">13</div>
<div class="a" style="left:1744px;top:687px;width:28px;height:22px;background:#f0f0f0"></div>
<div class="t" style="left:1737.5px;top:691.8px;width:30px;text-align:right;font-size:12.3px;color:#4a4a4a;font-weight:normal;letter-spacing:0px;-webkit-text-stroke:0.25px #444">14</div>
<div class="a" style="left:1773px;top:687px;width:27px;height:22px;background:#f0f0f0"></div>
<div class="t" style="left:1765.5px;top:691.8px;width:30px;text-align:right;font-size:12.3px;color:#4a4a4a;font-weight:normal;letter-spacing:0px;-webkit-text-stroke:0.25px #444">15</div>
<div class="a" style="left:1600px;top:710px;width:27px;height:22px;background:#f0f0f0"></div>
<div class="t" style="left:1592.5px;top:714.4px;width:30px;text-align:right;font-size:12.3px;color:#4a4a4a;font-weight:normal;letter-spacing:0px;-webkit-text-stroke:0.25px #444">16</div>
<div class="a" style="left:1628px;top:710px;width:28px;height:22px;background:#f0f0f0"></div>
<div class="t" style="left:1621.5px;top:714.4px;width:30px;text-align:right;font-size:12.3px;color:#4a4a4a;font-weight:normal;letter-spacing:0px;-webkit-text-stroke:0.25px #444">17</div>
<div class="a" style="left:1657px;top:710px;width:28px;height:22px;background:#f0f0f0"></div>
<div class="t" style="left:1650.5px;top:714.4px;width:30px;text-align:right;font-size:12.3px;color:#4a4a4a;font-weight:normal;letter-spacing:0px;-webkit-text-stroke:0.25px #444">18</div>
<div class="a" style="left:1686px;top:710px;width:28px;height:22px;background:#f0f0f0"></div>
<div class="t" style="left:1679.5px;top:714.4px;width:30px;text-align:right;font-size:12.3px;color:#3c8fd0;font-weight:normal;letter-spacing:0px;-webkit-text-stroke:0.25px #3c8fd0">19</div>
<div class="a" style="left:1715px;top:710px;width:28px;height:22px;background:#f0f0f0"></div>
<div class="t" style="left:1708.5px;top:714.4px;width:30px;text-align:right;font-size:12.3px;color:#4a4a4a;font-weight:normal;letter-spacing:0px;-webkit-text-stroke:0.25px #444">20</div>
<div class="a" style="left:1744px;top:710px;width:28px;height:22px;background:#f0f0f0"></div>
<div class="t" style="left:1737.5px;top:714.4px;width:30px;text-align:right;font-size:12.3px;color:#4a4a4a;font-weight:normal;letter-spacing:0px;-webkit-text-stroke:0.25px #444">21</div>
<div class="a" style="left:1773px;top:710px;width:27px;height:22px;background:#f0f0f0"></div>
<div class="t" style="left:1765.5px;top:714.4px;width:30px;text-align:right;font-size:12.3px;color:#4a4a4a;font-weight:normal;letter-spacing:0px;-webkit-text-stroke:0.25px #444">22</div>
<div class="a" style="left:1600px;top:733px;width:27px;height:21px;background:#f0f0f0"></div>
<div class="t" style="left:1592.5px;top:736.9px;width:30px;text-align:right;font-size:12.3px;color:#4a4a4a;font-weight:normal;letter-spacing:0px;-webkit-text-stroke:0.25px #444">23</div>
<div class="a" style="left:1628px;top:733px;width:28px;height:21px;background:#f0f0f0"></div>
<div class="t" style="left:1621.5px;top:736.9px;width:30px;text-align:right;font-size:12.3px;color:#4a4a4a;font-weight:normal;letter-spacing:0px;-webkit-text-stroke:0.25px #444">24</div>
<div class="a" style="left:1657px;top:733px;width:28px;height:21px;background:#f0f0f0"></div>
<div class="t" style="left:1650.5px;top:736.9px;width:30px;text-align:right;font-size:12.3px;color:#4a4a4a;font-weight:normal;letter-spacing:0px;-webkit-text-stroke:0.25px #444">25</div>
<div class="a" style="left:1686px;top:733px;width:28px;height:21px;background:#f0f0f0"></div>
<div class="t" style="left:1679.5px;top:736.9px;width:30px;text-align:right;font-size:12.3px;color:#4a4a4a;font-weight:normal;letter-spacing:0px;-webkit-text-stroke:0.25px #444">26</div>
<div class="a" style="left:1715px;top:733px;width:28px;height:21px;background:#f0f0f0"></div>
<div class="t" style="left:1708.5px;top:736.9px;width:30px;text-align:right;font-size:12.3px;color:#4a4a4a;font-weight:normal;letter-spacing:0px;-webkit-text-stroke:0.25px #444">27</div>
<div class="a" style="left:1744px;top:733px;width:28px;height:21px;background:#2c87cf"></div>
<div class="t" style="left:1737.5px;top:736.9px;width:30px;text-align:right;font-size:12.3px;color:#fff;font-weight:normal;letter-spacing:0px;-webkit-text-stroke:0.25px #fff">28</div>
<div class="a" style="left:1773px;top:733px;width:27px;height:21px;background:#f0f0f0"></div>
<div class="t" style="left:1765.5px;top:736.9px;width:30px;text-align:right;font-size:12.3px;color:#4a4a4a;font-weight:normal;letter-spacing:0px;-webkit-text-stroke:0.25px #444">29</div>
<div class="a" style="left:1600px;top:755px;width:27px;height:22px;background:#f0f0f0"></div>
<div class="t" style="left:1592.5px;top:759.3px;width:30px;text-align:right;font-size:12.3px;color:#4a4a4a;font-weight:normal;letter-spacing:0px;-webkit-text-stroke:0.25px #444">30</div>
<div class="a" style="left:1628px;top:755px;width:28px;height:22px;background:#f0f0f0"></div>
<div class="t" style="left:1621.5px;top:759.3px;width:30px;text-align:right;font-size:12.3px;color:#4a4a4a;font-weight:normal;letter-spacing:0px;-webkit-text-stroke:0.25px #444">31</div>
<div class="a" style="left:1657px;top:755px;width:28px;height:22px;background:#f9f9f9"></div>
<div class="t" style="left:1650.5px;top:759.3px;width:30px;text-align:right;font-size:12.3px;color:#aaa;font-weight:normal;letter-spacing:0px">1</div>
<div class="a" style="left:1686px;top:755px;width:28px;height:22px;background:#f9f9f9"></div>
<div class="t" style="left:1679.5px;top:759.3px;width:30px;text-align:right;font-size:12.3px;color:#aaa;font-weight:normal;letter-spacing:0px">2</div>
<div class="a" style="left:1715px;top:755px;width:28px;height:22px;background:#f9f9f9"></div>
<div class="t" style="left:1708.5px;top:759.3px;width:30px;text-align:right;font-size:12.3px;color:#aaa;font-weight:normal;letter-spacing:0px">3</div>
<div class="a" style="left:1744px;top:755px;width:28px;height:22px;background:#f9f9f9"></div>
<div class="t" style="left:1737.5px;top:759.3px;width:30px;text-align:right;font-size:12.3px;color:#aaa;font-weight:normal;letter-spacing:0px">4</div>
<div class="a" style="left:1773px;top:755px;width:27px;height:22px;background:#f9f9f9"></div>
<div class="t" style="left:1765.5px;top:759.3px;width:30px;text-align:right;font-size:12.3px;color:#aaa;font-weight:normal;letter-spacing:0px">5</div>
<div class="a" style="left:1903px;top:72px;width:17px;height:991px;background:#f1f1f1"></div>
<div class="a" style="left:1906px;top:95px;width:11px;height:820px;background:#c1c1c1"></div>
<svg style="left:1906px;top:76px" width="11" height="8"><path d="M1 6 L5.5 1.5 L10 6Z" fill="#505050"/></svg>
<svg style="left:1906px;top:1048px" width="11" height="8"><path d="M1 2 L5.5 6.5 L10 2Z" fill="#505050"/></svg>
<div class="a" style="left:0px;top:1063px;width:1920px;height:17px;background:#f1f1f1"></div>
<div class="a" style="left:17px;top:1065px;width:1852px;height:13px;background:#c1c1c1"></div>
<div class="a" style="left:1903px;top:1063px;width:17px;height:17px;background:#dcdcdc"></div>
<svg style="left:1888px;top:1066px" width="8" height="11"><path d="M2 1 L6.5 5.5 L2 10Z" fill="#505050"/></svg>
<svg style="left:4px;top:1066px" width="8" height="11"><path d="M6 1 L1.5 5.5 L6 10Z" fill="#a3a3a3"/></svg>
</body></html>
